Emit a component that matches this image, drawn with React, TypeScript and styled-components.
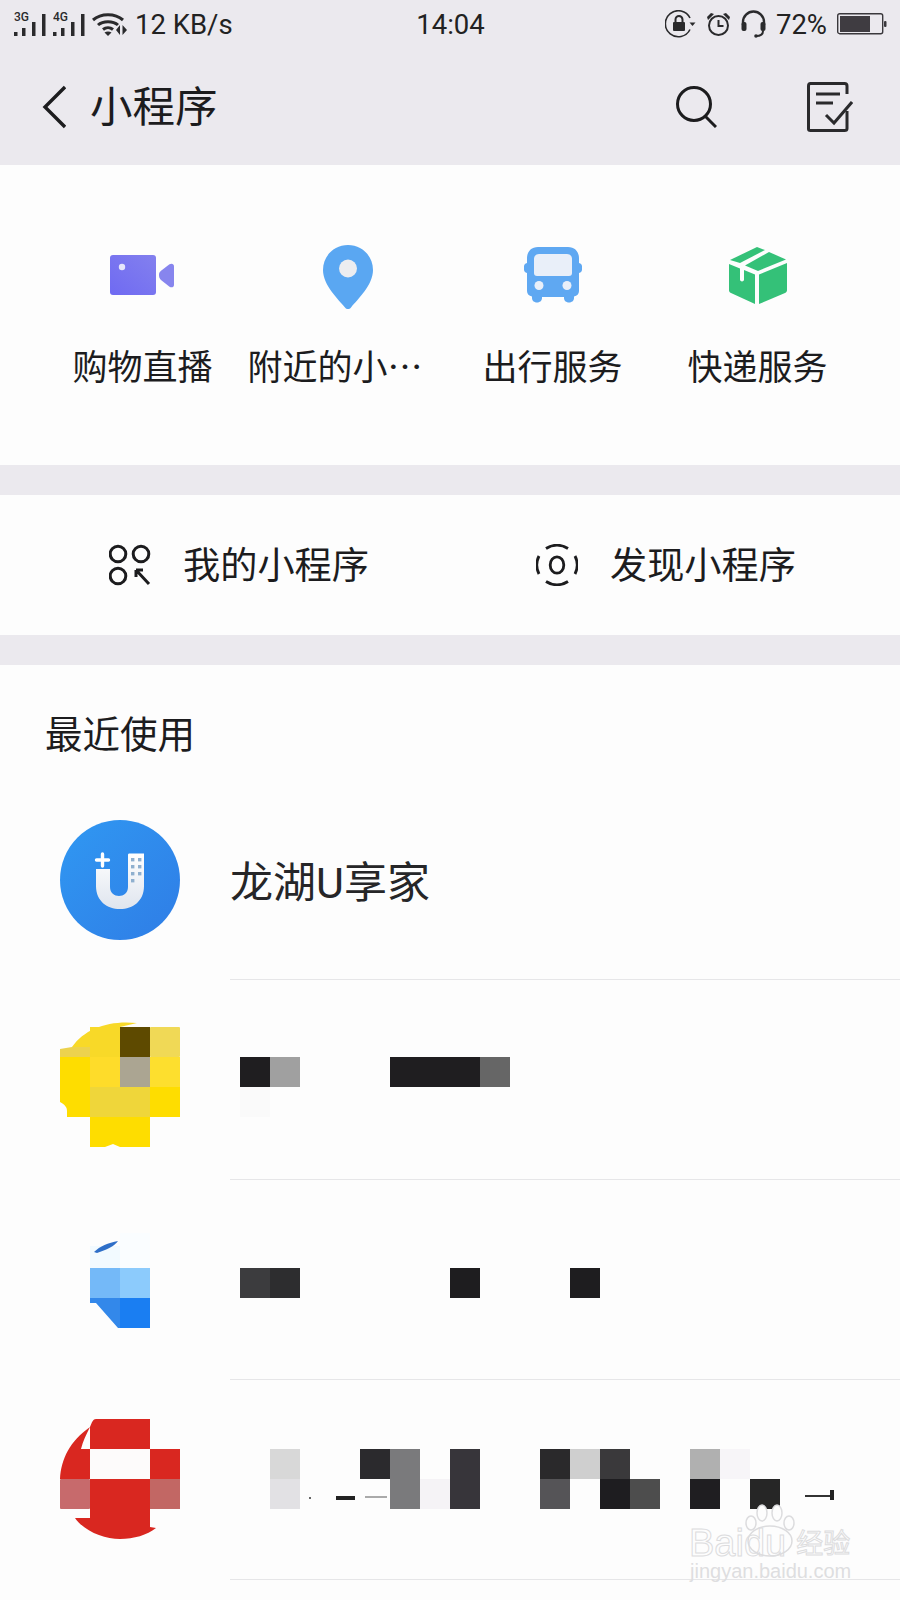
import type { ReactNode } from "react";
import styled, { createGlobalStyle } from "styled-components";

const GlobalStyle = createGlobalStyle`
  html, body {
    margin: 0;
    padding: 0;
    background: #fdfdfd;
  }
  * {
    box-sizing: border-box;
  }
`;

const Page = styled.div`
  position: relative;
  width: 900px;
  height: 1600px;
  overflow: hidden;
  background: #fdfdfd;
  color: #1c1c1e;
  font-family: Roboto, "Noto Sans CJK SC", sans-serif;
`;

const Header = styled.header`
  height: 165px;
  background: #ebe9ee;
`;

const StatusBar = styled.div`
  display: grid;
  grid-template-columns: 1fr auto 1fr;
  align-items: center;
  height: 48px;
  padding: 0 13px 0 14px;
  font-size: 27.5px;
  color: #222;
`;

const StatusSide = styled.div<{ $end?: boolean }>`
  display: flex;
  align-items: center;
  justify-content: ${(p) => (p.$end ? "flex-end" : "flex-start")};
  gap: ${(p) => (p.$end ? "10px" : "7px")};
`;

const NavBar = styled.div`
  display: flex;
  align-items: center;
  height: 117px;
  padding: 0 47px 0 42px;
`;

const NavTitle = styled.h1`
  flex: 1;
  margin: 4px 0 0 24px;
  font-size: 42.5px;
  font-weight: 400;
  line-height: 1;
`;

const NavAction = styled.span`
  display: flex;
  margin-left: 90px;
`;

const QuickGrid = styled.section`
  display: grid;
  grid-template-columns: repeat(4, 205px);
  height: 300px;
  padding: 77px 40px 0;
`;

const QuickItem = styled.div`
  display: flex;
  flex-direction: column;
  align-items: center;
`;

const QuickIcon = styled.div<{ $tall?: boolean }>`
  display: flex;
  align-items: center;
  justify-content: center;
  height: 66px;
  padding-top: ${(p) => (p.$tall ? "4px" : "0")};
`;

const QuickLabel = styled.div<{ $clipped?: boolean }>`
  width: 200px;
  margin-top: 38px;
  font-size: 35px;
  line-height: 46px;
  white-space: nowrap;
  text-align: ${(p) => (p.$clipped ? "left" : "center")};
`;

const Gap = styled.div`
  height: 30px;
  background: #ebe9ee;
`;

const EntryBar = styled.section`
  display: flex;
  align-items: center;
  gap: 167px;
  height: 140px;
  padding-left: 109px;
`;

const Entry = styled.div`
  display: flex;
  align-items: center;
  gap: 32px;
  font-size: 37.2px;
  line-height: 1;
`;

const EntryText = styled.span`
  margin-top: 3px;
`;

const SectionHeading = styled.h2`
  height: 115px;
  margin: 0;
  padding: 46px 0 0 45px;
  font-size: 37.5px;
  font-weight: 400;
  line-height: 48px;
`;

const Row = styled.div`
  display: flex;
  padding-left: 60px;
`;

const Avatar = styled.div<{ $top: number }>`
  flex: none;
  width: 120px;
  margin-top: ${(p) => p.$top}px;
  line-height: 0;
`;

const RowBody = styled.div`
  display: flex;
  flex: 1;
  align-items: flex-start;
  height: 200px;
  margin-left: 50px;
  border-bottom: 1px solid #e6e6e8;
`;

const RowTitle = styled.div`
  margin-top: 79px;
  font-size: 43px;
  line-height: 48px;
  color: #262628;
`;

const Mosaic = styled.div<{ $top: number }>`
  position: relative;
  display: grid;
  grid-template-columns: repeat(20, 30px);
  grid-auto-rows: 30px;
  margin: ${(p) => p.$top}px 0 0 10px;
`;

const Cell = styled.i<{ $col: number; $row: number; $color: string; $span?: number }>`
  display: block;
  grid-column: ${(p) => p.$col + 1} / span ${(p) => p.$span ?? 1};
  grid-row: ${(p) => p.$row + 1};
  background: ${(p) => p.$color};
`;

const Residue = styled.i<{ $left: number; $top: number; $width: number; $height: number; $color: string }>`
  position: absolute;
  left: ${(p) => p.$left}px;
  top: ${(p) => p.$top}px;
  width: ${(p) => p.$width}px;
  height: ${(p) => p.$height}px;
  background: ${(p) => p.$color};
`;

const Watermark = styled.div`
  position: absolute;
  left: 689px;
  top: 1504px;
  width: 170px;
  height: 84px;
  color: transparent;
  font-family: "Liberation Sans", "Noto Sans CJK SC", sans-serif;
`;

const WatermarkBrand = styled.div`
  position: absolute;
  left: 0;
  top: 22px;
  height: 34px;
  font-size: 38px;
  line-height: 34px;
  white-space: nowrap;
  -webkit-text-stroke: 1px #dcdcde;
`;

const WatermarkCn = styled.span`
  margin-left: 10px;
  font-size: 27px;
  line-height: 0;
  vertical-align: 3px;
`;

const WatermarkUrl = styled.div`
  position: absolute;
  left: 1px;
  top: 57px;
  font-size: 20px;
  line-height: 20px;
  color: #dedee0;
  white-space: nowrap;
`;

const WatermarkPaw = styled.svg`
  position: absolute;
  left: 53px;
  top: 0;
`;

function Signal({ label }: { label: string }) {
  return (
    <svg width="32" height="26" viewBox="0 0 32 26">
      <text x="0" y="10" fontSize="12" fontWeight="500" fontFamily="Roboto, sans-serif" fill="#2a2a2c">
        {label}
      </text>
      <rect x="0" y="21" width="3.500" height="4" fill="#2a2a2c" />
      <rect x="8" y="17" width="3.500" height="8" fill="#2a2a2c" />
      <rect x="18" y="11" width="3.500" height="14" fill="#2a2a2c" />
      <rect x="28" y="3" width="3.500" height="22" fill="#2a2a2c" />
    </svg>
  );
}

function Wifi() {
  return (
    <svg width="36" height="24" viewBox="0 0 36 24" fill="none" stroke="#2a2a2c" strokeWidth="3">
      <path d="M1 8c8-7 22-7 30 0" />
      <path d="M6 13c5-4.500 15-4.500 20 0" />
      <path d="M11 17.500c3-2.500 7-2.500 10 0" />
      <path d="M16 24l-3.500-3.500c2-1.500 5-1.500 7 0z" fill="#2a2a2c" stroke="none" />
      <path d="M28 13v10l-4-5zM30.500 13v10l4.500-5z" fill="#2a2a2c" stroke="none" />
    </svg>
  );
}

function LockRotate() {
  return (
    <svg width="31" height="28" viewBox="0 0 31 28" fill="none" stroke="#2a2a2c" strokeWidth="1.600">
      <path d="M25 19.500A13 13 0 1 1 25 8" />
      <path d="M24.500 12.500h6l-3 3.500z" fill="#2a2a2c" stroke="none" />
      <rect x="8" y="12" width="12" height="9" rx="1" fill="#2a2a2c" stroke="none" />
      <path d="M10.500 12V9.500a3.500 3.500 0 0 1 7 0V12" strokeWidth="2" />
    </svg>
  );
}

function Alarm() {
  return (
    <svg width="25" height="26" viewBox="0 0 25 26" fill="none" stroke="#2a2a2c" strokeWidth="2">
      <circle cx="12.500" cy="14.500" r="9.500" />
      <path d="M12.500 9v6h5" />
      <path d="M1 6l4-4 3 1-6 6zM24 6l-4-4-3 1 6 6z" fill="#2a2a2c" stroke="none" />
    </svg>
  );
}

function Headset() {
  return (
    <svg width="25" height="28" viewBox="0 0 25 28" fill="none" stroke="#2a2a2c" strokeWidth="2.400">
      <path d="M2 15V12a10.500 10.500 0 0 1 21 0v3" />
      <rect x="0.500" y="12" width="5" height="9" rx="2" fill="#2a2a2c" stroke="none" />
      <rect x="19.500" y="12" width="5" height="9" rx="2" fill="#2a2a2c" stroke="none" />
      <path d="M22 21c0 3-2 5-7 5" strokeWidth="2" />
      <circle cx="15" cy="26" r="1.800" fill="#2a2a2c" stroke="none" />
    </svg>
  );
}

function Battery() {
  return (
    <svg width="50" height="22" viewBox="0 0 50 22">
      <rect x="0.700" y="0.700" width="45" height="20" rx="2" fill="none" stroke="#3a383c" strokeWidth="1.400" />
      <rect x="3" y="3" width="30" height="16" fill="#3f3c41" />
      <rect x="47" y="8" width="2.500" height="6" rx="1" fill="#3a383c" />
    </svg>
  );
}

function VideoIcon() {
  return (
    <svg width="66" height="40" viewBox="0 0 66 40">
      <defs>
        <linearGradient id="videoFill" x1="0" y1="1" x2="1" y2="0">
          <stop offset="0" stopColor="#6f6af2" />
          <stop offset="1" stopColor="#8380ee" />
        </linearGradient>
      </defs>
      <rect width="46" height="40" rx="3" fill="url(#videoFill)" />
      <circle cx="12" cy="12" r="3.200" fill="#e6e6fb" />
      <path d="M49 20c0-2 .6-3 2-4.200l8.500-6.500c2-1.300 4.500-.6 4.500 2v18.400c0 2.600-2.500 3.300-4.500 2L51 25c-1.400-1.200-2-3-2-5z" fill="#8785ee" />
    </svg>
  );
}

function PinIcon() {
  return (
    <svg width="50" height="64" viewBox="0 0 50 64">
      <path d="M25 0C11 0 0 11 0 25c0 15 15 29 22 37.500 1.600 2 4.400 2 6 0C35 54 50 40 50 25 50 11 39 0 25 0z" fill="#5aa7f2" />
      <circle cx="25" cy="23.500" r="9" fill="#ecedf0" />
    </svg>
  );
}

function BusIcon() {
  return (
    <svg width="58" height="56" viewBox="0 0 58 56">
      <path d="M14 0h30c7 0 11 5 11 11v5c2 .4 3 1.500 3 3.500v3c0 2-1 3-3 3.500V44c0 3-2 5-5 5.500V51c0 6-10 6-10 0v-1H18v1c0 6-10 6-10 0v-1.500C5 49 3 47 3 44V26c-2-.5-3-1.500-3-3.500v-3c0-2 1-3.100 3-3.500v-5C3 5 7 0 14 0z" fill="#5fa8f2" />
      <path d="M15 7h28c3 0 5 2 5 5v14c0 2-1 3-3 3H13c-2 0-3-1-3-3V12c0-3 2-5 5-5z" fill="#e9eff9" />
      <circle cx="15" cy="38.500" r="4.500" fill="#e9eff9" />
      <circle cx="43" cy="38.500" r="4.500" fill="#e9eff9" />
    </svg>
  );
}

function BoxIcon() {
  return (
    <svg width="60" height="58" viewBox="0 0 60 58">
      <path d="M2 14L29 1l8 3L12 17z" fill="#34c178" />
      <path d="M17 19.500L41 6l17 7.500L30 25z" fill="#34c178" />
      <path d="M1 18l11 4.500v11c0 2.500 4 2.500 4 0V24l11 4.500V58L3 47c-1.500-.7-2-1.500-2-3z" fill="#34c178" />
      <path d="M31 28.500L59 17v27c0 1.500-.6 2.400-2 3L31 58z" fill="#34c178" />
    </svg>
  );
}

function MyAppsIcon() {
  return (
    <svg width="42" height="42" viewBox="0 0 42 42" fill="none" stroke="#1c1c1e" strokeWidth="3">
      <circle cx="9" cy="10" r="7.800" />
      <circle cx="32" cy="10" r="7.800" />
      <circle cx="9" cy="32" r="7.800" />
      <path d="M27 26v7M27 26h7M27 26l13 14" />
    </svg>
  );
}

function DiscoverIcon() {
  return (
    <svg width="42" height="42" viewBox="0 0 42 42" fill="none" stroke="#1c1c1e" strokeWidth="2.800">
      <ellipse cx="21" cy="21" rx="6.800" ry="8.200" />
      <path d="M10 4.500a20 20 0 0 1 22 0" />
      <path d="M3 12a20 20 0 0 0 0 18" />
      <path d="M39 12a20 20 0 0 1 0 18" />
      <path d="M10 37.500a20 20 0 0 0 22 0" />
    </svg>
  );
}

function LonghuAvatar() {
  return (
    <svg width="120" height="120" viewBox="0 0 120 120">
      <defs>
        <linearGradient id="longhuFill" x1="0" y1="0" x2="1" y2="1">
          <stop offset="0" stopColor="#3098f2" />
          <stop offset="1" stopColor="#2f7de6" />
        </linearGradient>
        <linearGradient id="longhuU" x1="0" y1="0" x2="0" y2="1">
          <stop offset="0" stopColor="#ffffff" />
          <stop offset="1" stopColor="#dfe5ee" />
        </linearGradient>
      </defs>
      <circle cx="60" cy="60" r="60" fill="url(#longhuFill)" />
      <path d="M36 49h14v18c0 12 18 12 18 0V35c0-1 .500-1.500 1.500-1.500H84V66c0 15-11 23-24 23S36 81 36 66z" fill="url(#longhuU)" />
      <path d="M42.500 34v12M36.500 40h12" stroke="#fff" strokeWidth="3.400" strokeLinecap="round" />
      <g fill="#8fb0cf">
        <rect x="71" y="38" width="3.400" height="3.400" />
        <rect x="78" y="38" width="3.400" height="3.400" />
        <rect x="71" y="45" width="3.400" height="3.400" />
        <rect x="78" y="45" width="3.400" height="3.400" />
        <rect x="71" y="52" width="3.400" height="3.400" />
        <rect x="78" y="52" width="3.400" height="3.400" />
        <rect x="71" y="59" width="3.400" height="3.400" />
      </g>
    </svg>
  );
}

function YellowAvatar() {
  return (
    <svg width="120" height="130" viewBox="0 0 120 130">
      <path d="M12 27C25 8 50 0 77 3L60 7v20z" fill="#f8d928" />
      <path d="M0 29l12-2h18v10H0z" fill="#ecd24e" />
      <rect x="30" y="7" width="30" height="30" fill="#f8d928" />
      <path d="M0 37h30v60H7v-6c0-4-2-6-7-9z" fill="#fedd00" />
      <rect x="30" y="37" width="30" height="30" fill="#fedc2a" />
      <rect x="60" y="7" width="30" height="30" fill="#5e4a00" />
      <rect x="60" y="37" width="30" height="30" fill="#aba592" />
      <rect x="90" y="7" width="30" height="30" rx="1" fill="#f0d956" />
      <rect x="90" y="37" width="30" height="30" fill="#fddf2e" />
      <rect x="30" y="67" width="60" height="30" fill="#efd63a" />
      <rect x="90" y="67" width="30" height="30" fill="#fedd00" />
      <path d="M30 97h60v30H60l-7-3-8 3H30z" fill="#fedd00" />
    </svg>
  );
}

function BlueAvatar() {
  return (
    <svg width="120" height="120" viewBox="0 0 120 120">
      <rect x="30" y="26" width="30" height="22" fill="#f2faff" />
      <rect x="60" y="13" width="30" height="35" fill="#fafdff" />
      <path d="M34 32c6-6 14-9 24-11-3 5-12 9-21 12z" fill="#2f6fc8" />
      <rect x="30" y="48" width="30" height="30" fill="#74b9f8" />
      <rect x="60" y="48" width="30" height="30" fill="#8ccbfc" />
      <path d="M30 78h30v30h-2L36 83h-6z" fill="#3388ea" />
      <rect x="60" y="78" width="30" height="30" fill="#1a7ef2" />
    </svg>
  );
}

function RedAvatar() {
  return (
    <svg width="120" height="120" viewBox="0 0 120 120">
      <path d="M0 60C1 40 10 22 30 8c-4 8-7 14-9 22h9v30z" fill="#d92720" />
      <path d="M36 0h54v30H30V8c2-5 3-8 6-8z" fill="#d92720" />
      <rect x="30" y="30" width="60" height="30" fill="#fdfbfb" />
      <rect x="90" y="30" width="30" height="30" fill="#d92720" />
      <rect x="0" y="60" width="30" height="30" rx="1" fill="#c76a6c" />
      <rect x="30" y="60" width="60" height="30" fill="#d92720" />
      <rect x="90" y="60" width="30" height="30" fill="#c26764" />
      <path d="M30 90v9H15c9 13 29 21 45 21 14 0 27-4 36-11l-6-1V90z" fill="#d92720" />
    </svg>
  );
}

type CellData = [number, number, string, number?];

const secondRow: CellData[] = [
  [0, 0, "#1f1e20"],
  [1, 0, "#a0a0a0"],
  [5, 0, "#1f1e20", 3],
  [8, 0, "#666"],
  [0, 1, "#fafafa"],
];

const thirdRow: CellData[] = [
  [0, 0, "#3c3c3e"],
  [1, 0, "#2d2d2f"],
  [7, 0, "#1e1d1f"],
  [11, 0, "#1e1d1f"],
];

const fourthRow: CellData[] = [
  [1, 0, "#d8d8d8"],
  [1, 1, "#e2e1e4"],
  [4, 0, "#2b2a2d"],
  [5, 0, "#7a7a7c"],
  [5, 1, "#7a7a7c"],
  [6, 1, "#f5f3f6"],
  [7, 0, "#37353a"],
  [7, 1, "#37353a"],
  [10, 0, "#2a292b"],
  [10, 1, "#555457"],
  [11, 0, "#cfcfcf"],
  [12, 0, "#3a393b"],
  [12, 1, "#1e1d20"],
  [13, 1, "#4d4d4d"],
  [15, 0, "#b0b0b0"],
  [15, 1, "#1f1e21"],
  [16, 0, "#f7f5f8"],
  [17, 1, "#262626"],
];

function MosaicText({ cells, top, children }: { cells: CellData[]; top: number; children?: ReactNode }) {
  return (
    <Mosaic $top={top}>
      {cells.map(([col, row, color, span], index) => (
        <Cell key={index} $col={col} $row={row} $color={color} $span={span} />
      ))}
      {children}
    </Mosaic>
  );
}

export default function App() {
  return (
    <Page>
      <GlobalStyle />
      <Header>
        <StatusBar>
          <StatusSide>
            <Signal label="3G" />
            <Signal label="4G" />
            <Wifi />
            <span>12 KB/s</span>
          </StatusSide>
          <span>14:04</span>
          <StatusSide $end>
            <LockRotate />
            <Alarm />
            <Headset />
            <span>72%</span>
            <Battery />
          </StatusSide>
        </StatusBar>
        <NavBar>
          <svg width="24" height="44" viewBox="0 0 24 44" fill="none" stroke="#1c1c1e" strokeWidth="3.400">
            <path d="M23 2L3 22l20 20" />
          </svg>
          <NavTitle>小程序</NavTitle>
          <NavAction>
            <svg width="42" height="42" viewBox="0 0 42 42" fill="none" stroke="#1c1c1e" strokeWidth="3">
              <circle cx="19" cy="18" r="16.500" />
              <path d="M30 30l11 11" />
            </svg>
          </NavAction>
          <NavAction>
            <svg width="46" height="50" viewBox="0 0 46 50" fill="none" stroke="#2a2a2c" strokeWidth="3">
              <path d="M40 12V4c0-1.500-1-2.500-2.500-2.500h-34C2 1.500 1.500 2.500 1.500 4v43c0 1 .5 1.500 2 1.500h34c1.500 0 2.500-.5 2.500-2V29" />
              <path d="M9 12h24M9 21h17" />
              <path d="M19 33l8 8 18-21" />
            </svg>
          </NavAction>
        </NavBar>
      </Header>

      <QuickGrid>
        <QuickItem>
          <QuickIcon><VideoIcon /></QuickIcon>
          <QuickLabel>购物直播</QuickLabel>
        </QuickItem>
        <QuickItem>
          <QuickIcon $tall><PinIcon /></QuickIcon>
          <QuickLabel $clipped>附近的小⋯</QuickLabel>
        </QuickItem>
        <QuickItem>
          <QuickIcon><BusIcon /></QuickIcon>
          <QuickLabel>出行服务</QuickLabel>
        </QuickItem>
        <QuickItem>
          <QuickIcon><BoxIcon /></QuickIcon>
          <QuickLabel>快递服务</QuickLabel>
        </QuickItem>
      </QuickGrid>
      <Gap />

      <EntryBar>
        <Entry>
          <MyAppsIcon />
          <EntryText>我的小程序</EntryText>
        </Entry>
        <Entry>
          <DiscoverIcon />
          <EntryText>发现小程序</EntryText>
        </Entry>
      </EntryBar>
      <Gap />

      <SectionHeading>最近使用</SectionHeading>
      <Row>
        <Avatar $top={40}><LonghuAvatar /></Avatar>
        <RowBody>
          <RowTitle>龙湖U享家</RowTitle>
        </RowBody>
      </Row>
      <Row>
        <Avatar $top={40}><YellowAvatar /></Avatar>
        <RowBody>
          <MosaicText cells={secondRow} top={77} />
        </RowBody>
      </Row>
      <Row>
        <Avatar $top={40}><BlueAvatar /></Avatar>
        <RowBody>
          <MosaicText cells={thirdRow} top={88} />
        </RowBody>
      </Row>
      <Row>
        <Avatar $top={39}><RedAvatar /></Avatar>
        <RowBody>
          <MosaicText cells={fourthRow} top={69}>
            <Residue $left={69} $top={48} $width={2} $height={2} $color="#666" />
            <Residue $left={96} $top={47} $width={19} $height={4} $color="#222" />
            <Residue $left={125} $top={47} $width={22} $height={2} $color="#aaa" />
            <Residue $left={565} $top={46} $width={25} $height={2} $color="#333" />
            <Residue $left={590} $top={41} $width={4} $height={10} $color="#222" />
          </MosaicText>
        </RowBody>
      </Row>

      <Watermark>
        <WatermarkPaw width="56" height="54" viewBox="0 0 56 54" fill="#fdfdfd" stroke="#dcdcde" strokeWidth="1.500">
          <ellipse cx="9" cy="19" rx="5" ry="7" />
          <ellipse cx="20" cy="9" rx="5" ry="8" />
          <ellipse cx="35" cy="9" rx="5" ry="8" />
          <ellipse cx="47" cy="19" rx="5" ry="7" />
          <ellipse cx="28" cy="37" rx="22" ry="15" />
        </WatermarkPaw>
        <WatermarkBrand>
          Baidu<WatermarkCn>经验</WatermarkCn>
        </WatermarkBrand>
        <WatermarkUrl>jingyan.baidu.com</WatermarkUrl>
      </Watermark>
    </Page>
  );
}
